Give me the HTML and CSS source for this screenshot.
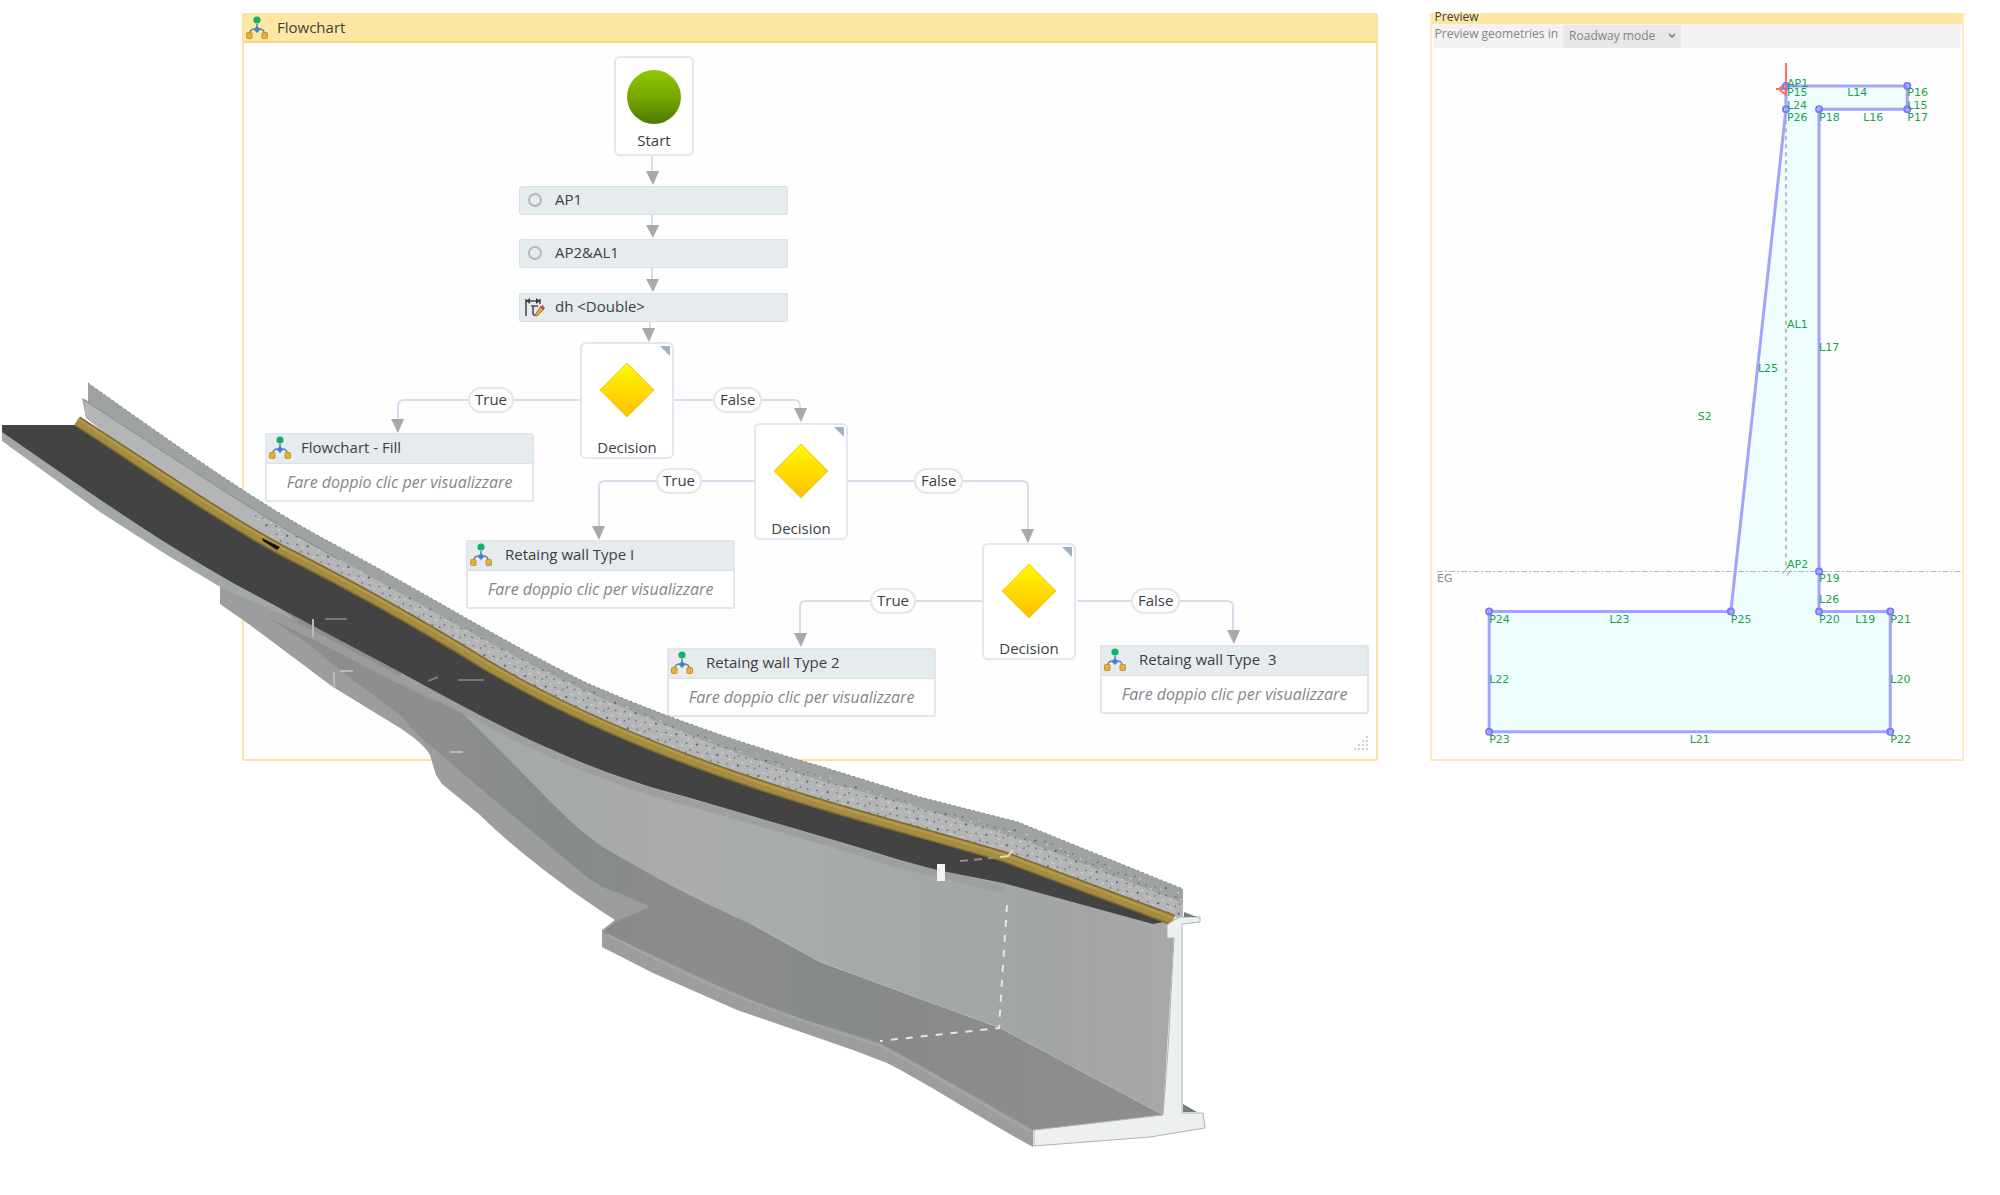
FILE: index.html
```html
<!DOCTYPE html>
<html lang="en">
<head>
<meta charset="utf-8">
<title>Retaining wall flowchart</title>
<link rel="stylesheet" href="styles.css">
</head>
<body>
<svg class="defs" width="0" height="0" aria-hidden="true">
  <defs>
    <linearGradient id="green" x1="0" y1="0" x2="0" y2="1"><stop offset="0" stop-color="#8fc800"/><stop offset=".5" stop-color="#76a800"/><stop offset="1" stop-color="#4f7a00"/></linearGradient>
    <linearGradient id="yellow" x1="0" y1="0" x2="0" y2="1"><stop offset="0" stop-color="#fffa00"/><stop offset="1" stop-color="#ffbf00"/></linearGradient>
    <symbol id="flow" viewBox="0 0 22 23">
      <path d="M11 8v6M4 17c0-3 2-4 5-4h4c3 0 5 1 5 4" fill="none" stroke="#6f7f96" stroke-width="1.5"/>
      <circle cx="11" cy="4" r="3.6" fill="#12b268"/>
      <path d="M11 10l3.500 3.500-3.500 3.500-3.500-3.500z" fill="#4a7fd6"/>
      <rect x=".5" y="16.500" width="5.500" height="6" rx="1" fill="#e5b040" stroke="#c8922a"/>
      <rect x="16" y="16.500" width="5.500" height="6" rx="1" fill="#e5b040" stroke="#c8922a"/>
    </symbol>
    <symbol id="diamond" viewBox="0 0 56 56"><path d="M28 1l27 27-27 27L1 28z" fill="url(#yellow)" stroke="#f3c52d"/></symbol>
    <symbol id="ring" viewBox="0 0 22 23"><circle cx="12" cy="12" r="6" fill="none" stroke="#b4b8ba" stroke-width="2"/></symbol>
    <symbol id="variable" viewBox="0 0 22 23">
      <path d="M3 4v17M3 6h14M17 4v5M8 11h7M10 11v7c0 2 2 3 3 2" fill="none" stroke="#4a4d52" stroke-width="1.600"/>
      <path d="M7 3L3 6l4 3zM13 3l4 3-4 3z" fill="#3a3d42"/>
      <path d="M12 20l6-9 3 3-7 7z" fill="#f0a52c" stroke="#a5702c"/><path d="M17.500 12l2-2 2.500 3-2 2z" fill="#d8413a"/>
    </symbol>
  </defs>
</svg>

<main class="board">
  <section class="panel flowchart">
    <h1 class="panel-head"><svg class="icon"><use href="#flow"/></svg>Flowchart</h1>
    <div class="canvas">
      <svg class="links" viewBox="244 43 1133 716" aria-hidden="true">
        <g class="wire">
          <path d="M652 156v18M652 215v14M652 268v14M650 322v10"/>
          <path d="M580 400H404q-6 0-6 6v16M674 400h120q6 0 6 6v6"/>
          <path d="M754 481H605q-6 0-6 6v42M848 481h174q6 0 6 6v46"/>
          <path d="M982 601H806q-6 0-6 6v30M1077 601h150q6 0 6 6v26"/>
        </g>
        <g class="tip">
          <path d="M646 171h13l-6 14zM646 225h13l-6 13zM646 279h13l-6 13zM642 328h13l-6 14z"/>
          <path d="M391 419h13l-6 14zM794 408h13l-6 14zM592 526h13l-6 14zM1021 529h13l-6 14zM794 633h13l-6 14zM1227 630h13l-6 14z"/>
        </g>
        <path class="grip" d="M1366 736h2v2h-2zM1366 740h2v2h-2zM1366 744h2v2h-2zM1366 748h2v2h-2zM1362 740h2v2h-2zM1362 744h2v2h-2zM1362 748h2v2h-2zM1358 744h2v2h-2zM1358 748h2v2h-2zM1354 748h2v2h-2z"/>
      </svg>

      <div class="node start"><svg class="shape" viewBox="0 0 56 56"><circle cx="28" cy="28" r="27" fill="url(#green)"/></svg>Start</div>

      <div class="node step step-ap1"><svg class="icon"><use href="#ring"/></svg>AP1</div>
      <div class="node step step-ap2"><svg class="icon"><use href="#ring"/></svg>AP2&amp;AL1</div>
      <div class="node step step-dh"><svg class="icon"><use href="#variable"/></svg>dh &lt;Double&gt;</div>

      <div class="node decision decision-1"><svg class="shape"><use href="#diamond"/></svg>Decision</div>
      <div class="node decision decision-2"><svg class="shape"><use href="#diamond"/></svg>Decision</div>
      <div class="node decision decision-3"><svg class="shape"><use href="#diamond"/></svg>Decision</div>

      <span class="node pill true-1">True</span>
      <span class="node pill false-1">False</span>
      <span class="node pill true-2">True</span>
      <span class="node pill false-2">False</span>
      <span class="node pill true-3">True</span>
      <span class="node pill false-3">False</span>

      <article class="node card card-fill"><h2><svg class="icon"><use href="#flow"/></svg>Flowchart - Fill</h2><p>Fare doppio clic per visualizzare</p></article>
      <article class="node card card-1"><h2><svg class="icon"><use href="#flow"/></svg>Retaing wall Type I</h2><p>Fare doppio clic per visualizzare</p></article>
      <article class="node card card-2"><h2><svg class="icon"><use href="#flow"/></svg>Retaing wall Type 2</h2><p>Fare doppio clic per visualizzare</p></article>
      <article class="node card card-3"><h2><svg class="icon"><use href="#flow"/></svg>Retaing wall Type&nbsp; 3</h2><p>Fare doppio clic per visualizzare</p></article>
    </div>
  </section>

  <section class="panel preview">
    <h2 class="preview-head">Preview</h2>
    <div class="toolbar">
      <label for="mode">Preview geometries in</label>
      <span class="select"><select id="mode"><option>Roadway mode</option></select><svg viewBox="0 0 8 6" aria-hidden="true"><path d="M1 1l3 3 3-3" fill="none" stroke="#777" stroke-width="1.500"/></svg></span>
    </div>
    <svg class="section" viewBox="1433 48 529 709">
      <path fill="#eefefe" d="M1786 86H1907V109H1819V610H1890V730H1490V610H1731L1786 109z"/>
      <path class="ground" d="M1438 570H1962"/>
      <path class="axis" d="M1786 112V566"/>
      <path class="mark" d="M1783 572l5-7M1787 574l4-5"/>
      <path class="edge" d="M1786 86H1907V109H1819V610H1890V730H1490V610H1731L1786 109z"/>
      <path d="M1786 63V96M1776 89h12M1786 83l-7 6 7 6" fill="none" stroke="#ff6b6b" stroke-width="2"/>
      <g class="points">
        <circle cx="1786" cy="86" r="3"/><circle cx="1907" cy="86" r="3"/><circle cx="1907" cy="109" r="3"/><circle cx="1819" cy="109" r="3"/><circle cx="1786" cy="109" r="3"/><circle cx="1819" cy="570" r="3"/><circle cx="1819" cy="610" r="3"/><circle cx="1890" cy="610" r="3"/><circle cx="1890" cy="730" r="3"/><circle cx="1490" cy="730" r="3"/><circle cx="1490" cy="610" r="3"/><circle cx="1731" cy="610" r="3"/>
      </g>
      <g class="labels">
        <text x="1787" y="87">AP1</text><text x="1787" y="96">P15</text><text x="1787" y="109">L24</text><text x="1787" y="121">P26</text>
        <text x="1847" y="96">L14</text><text x="1907" y="96">P16</text><text x="1907" y="109">L15</text><text x="1907" y="121">P17</text>
        <text x="1819" y="121">P18</text><text x="1863" y="121">L16</text>
        <text x="1787" y="327">AL1</text><text x="1819" y="350">L17</text><text x="1758" y="371">L25</text><text x="1698" y="419">S2</text>
        <text x="1787" y="567">AP2</text><text x="1819" y="581">P19</text><text x="1819" y="601">L26</text>
        <text x="1819" y="621">P20</text><text x="1855" y="621">L19</text><text x="1890" y="621">P21</text>
        <text x="1490" y="621">P24</text><text x="1610" y="621">L23</text><text x="1731" y="621">P25</text>
        <text x="1490" y="681">L22</text><text x="1890" y="681">L20</text>
        <text x="1490" y="741">P23</text><text x="1690" y="741">L21</text><text x="1890" y="741">P22</text>
        <text class="eg" x="1438" y="581">EG</text>
      </g>
    </svg>
  </section>
</main>

<svg class="road" viewBox="0 0 2000 1195" role="img" aria-label="Road model with retaining walls">
  <defs>
    <pattern id="grit" width="23" height="17" patternUnits="userSpaceOnUse" patternTransform="rotate(27)">
      <path d="M1 3h2v1H1zM9 1h1v2H9zM15 6h2v2h-2zM5 10h2v1H5zM19 13h2v1h-2zM12 14h1v2h-1z" fill="#62676b"/>
      <path d="M5 5h2v1H5zM18 2h2v1h-2zM11 10h2v1h-2zM2 14h2v1H2z" fill="#d9dcdd"/>
    </pattern>
    <linearGradient id="wall" gradientUnits="userSpaceOnUse" x1="480" y1="0" x2="1175" y2="0"><stop offset="0" stop-color="#a4a9a7"/><stop offset=".22" stop-color="#a7aaa8"/><stop offset=".29" stop-color="#ababab"/><stop offset=".4" stop-color="#a7ada9"/><stop offset=".78" stop-color="#a1a7a3"/><stop offset=".88" stop-color="#a5a5a5"/><stop offset="1" stop-color="#a8a8a8"/></linearGradient>
    <linearGradient id="floor" gradientUnits="userSpaceOnUse" x1="300" y1="0" x2="1165" y2="0"><stop offset="0" stop-color="#8e8e8e"/><stop offset=".17" stop-color="#8d8e8e"/><stop offset=".28" stop-color="#868c89"/><stop offset=".38" stop-color="#888b8a"/><stop offset=".42" stop-color="#8c8c8c"/><stop offset=".52" stop-color="#8b8c8c"/><stop offset=".6" stop-color="#858b88"/><stop offset=".7" stop-color="#888a89"/><stop offset=".8" stop-color="#8c8c8c"/><stop offset="1" stop-color="#8e8e8e"/></linearGradient>
  </defs>
  <!-- footing sides -->
  <path fill="#9b9e9d" d="M220 583V604L250 625 333 687 400 728C415 738 425 746 430 755L436 775 442 784 480 815C510 845 560 885 615 920L602 930V947L653 973 737 1010 853 1050 887 1063C930 1085 980 1118 1033 1147V1125L800 960 500 740 400 670z"/>
  <!-- footing top -->
  <path fill="url(#floor)" d="M235 596L307 643 350 678 400 715 420 737C470 780 530 830 570 863Q600 890 620 893L650 907 615 922 603 932 670 963Q737 996 800 1018L880 1043Q930 1070 1035 1131L1165 1116 1000 1028 937 1005 820 962 753 925 670 885 603 847 570 820 493 743 455 700 400 668 300 610z"/>
  <path fill="none" stroke="#a5a6a5" stroke-width="2" d="M608 935L670 966Q737 998 800 1020L880 1046Q930 1073 1031 1132"/>
  <!-- wall face -->
  <path fill="url(#wall)" d="M400 672C430 690 445 695 460 711L493 743C540 790 570 825 603 847 650 875 700 902 753 925L820 962 937 1005 1000 1028 1163 1115 1175 920 900 855 687 795 553 750z"/>
  <path fill="none" stroke="#9a9d9c" stroke-width="8" d="M225 592L317 637 400 680 440 699"/>
  <path fill="none" stroke="#9da09e" stroke-width="7" d="M400 676C490 726 580 774 687 802 757 822 830 842 900 865L1003 889"/>
  <!-- deck edge -->
  <path fill="#a3a7a8" d="M2 430V441L100 512 167 555 222 588 300 623 233 575 83 480z"/>
  <!-- asphalt -->
  <path fill="#434343" d="M2 425H77C150 468 215 514 283 551 350 585 417 622 483 663 590 727 710 771 820 804 880 822 940 838 1005 857L1173 920 1153 924 1003 883 937 870 900 860C830 838 757 818 687 797 580 770 490 722 400 672L317 628 233 583C180 553 130 520 83 488L2 432z"/>
  <!-- barrier -->
  <path fill="#9fa2a3" d="M88 383C180 448 260 505 330 542 420 590 500 640 587 683 660 715 740 743 820 766L920 797 1018 822 1183 889V918L1173 917 1005 857C940 838 880 822 820 804 710 771 590 727 483 663 417 622 350 585 283 551 215 514 150 468 86 418L82 398 88 401z"/>
  <path fill="#b3b5b6" d="M84 400C180 462 260 517 340 560 420 603 500 652 590 693 660 724 740 757 820 780L920 808 1018 838 1183 903V918L1173 917 1005 857C940 838 880 822 820 804 710 771 590 727 483 663 417 622 350 585 283 551 215 514 150 468 86 418z"/>
  <path fill="url(#grit)" d="M250 510L340 560C420 603 500 647 590 690 660 720 740 752 820 775L920 805 1018 830 1183 893V918L1173 917 1005 857C940 838 880 822 820 804 710 771 590 727 483 663 417 622 350 585 283 551z"/>
  <path fill="none" stroke="#7d8183" stroke-width="1" stroke-dasharray="2 3" d="M88 383C180 448 260 505 330 542 420 590 500 640 587 683 660 715 740 743 820 766L920 797 1018 822 1183 889"/>
  <path fill="none" stroke="#8b8f91" stroke-width="1" d="M84 400C180 462 260 517 340 560"/>
  <!-- kerb line -->
  <path fill="none" stroke="#7d6a33" stroke-width="11" d="M77 421C150 468 215 514 283 551 350 585 417 622 483 663 590 727 710 771 820 804 880 822 940 838 1005 857L1173 920"/>
  <path fill="none" stroke="#a68c41" stroke-width="8" d="M77 421C150 468 215 514 283 551 350 585 417 622 483 663 590 727 710 771 820 804 880 822 940 838 1005 857L1173 920"/>
  <path fill="none" stroke="#b59a4a" stroke-width="2" d="M78 419C151 466 216 512 284 549 351 583 418 620 484 661 591 725 711 769 820 802 880 820 940 836 1005 855L1173 918"/>
  <path fill="#111" d="M262 538l18 9-3 3-14-9z"/>
  <!-- cut section -->
  <path fill="#eef0ed" stroke="#a9b4bc" d="M1167 925L1174 920 1180 917H1200V922L1182 924V1113H1203L1205 1128 1150 1137 1034 1146V1130L1163 1115 1168 1050 1174 938H1167z"/>
  <path fill="#777c7e" d="M1184 912l13 5h-13zM1183 1104l14 8h-14z"/>
  <!-- break marks -->
  <g fill="none" stroke="#e4e8e5" stroke-width="2">
    <path stroke-dasharray="7 8" d="M1007 905L1003 965 999 1028 880 1041"/>
    <path stroke="#8f918f" stroke-dasharray="8 6" d="M960 861L1002 857"/>
    <path stroke="#777" d="M325 619h22M458 680h26M428 681l10-4"/>
    <path stroke="#b8bab9" d="M313 619v18M340 671h13M450 752h13M334 672v16"/>
    <path stroke="#e6dcae" d="M1000 857l8-1 5-6"/>
  </g>
  <path fill="#f4f5f3" d="M937 864h8v17h-8z"/>
</svg>
</body>
</html>
```
FILE: styles.css
```css
* { box-sizing: border-box; }

body {
  margin: 0;
  position: relative;
  background: #fff;
  color: #3b3f45;
  font: 15px/20px "Open Sans", "Noto Sans", sans-serif;
}

h1, h2, p { margin: 0; font: inherit; }

.defs { position: absolute; }

.board {
  display: flex;
  align-items: flex-start;
  gap: 52px;
  padding: 13px 36px 434px 242px;
}

.panel { border: 2px solid #fce3a5; background: #fefefe; }

.icon { width: 22px; height: 23px; flex: none; }

/* Flowchart panel */
.flowchart { flex: 1137 1 0; border-radius: 2px; }

.panel-head {
  display: flex;
  align-items: center;
  gap: 9px;
  height: 28px;
  padding: 0 2px 2px;
  background: #fee7a2;
  border-bottom: 2px solid #fbd57d;
  font-weight: 500;
}

.canvas { position: relative; height: 716px; }

.links { position: absolute; left: 0; top: 0; width: 1133px; height: 716px; }
.wire { fill: none; stroke: #d5deea; stroke-width: 2; }
.tip { fill: #a9a9a9; }
.grip { fill: #d0d0dc; }

.node { position: absolute; border: 2px solid #e2e6f0; background: #fff; }

.start,
.decision {
  display: flex;
  flex-direction: column;
  align-items: center;
  justify-content: space-between;
  border-radius: 6px;
}

.shape { width: 56px; height: 56px; }

.start { left: 370px; top: 13px; width: 80px; height: 100px; padding: 11px 0 4px; }

.decision { width: 94px; height: 117px; padding-top: 18px; }
.decision::after {
  content: "";
  position: absolute;
  right: 2px;
  top: 2px;
  border-top: 10px solid #9fb2c0;
  border-left: 10px solid transparent;
}
.decision-1 { left: 336px; top: 299px; }
.decision-2 { left: 510px; top: 380px; }
.decision-3 { left: 738px; top: 500px; }

.step {
  left: 275px;
  width: 269px;
  height: 29px;
  display: flex;
  align-items: center;
  gap: 10px;
  padding-left: 3px;
  padding-bottom: 3px;
  background: #e6ebee;
  border: 1px solid #dae1e9;
  border-radius: 2px;
  font-weight: 500;
}
.step-ap1 { top: 143px; }
.step-ap2 { top: 196px; }
.step-dh { top: 250px; }

.pill {
  height: 26px;
  padding: 0 5px;
  line-height: 21px;
  border-color: #e6e6e6;
  border-radius: 13px;
}
.true-1 { left: 224px; top: 344px; }
.false-1 { left: 469px; top: 344px; }
.true-2 { left: 412px; top: 425px; }
.false-2 { left: 670px; top: 425px; }
.true-3 { left: 626px; top: 545px; }
.false-3 { left: 887px; top: 545px; }

.card { width: 269px; height: 69px; border-color: #e0e5ee; border-radius: 2px; }
.card h2 {
  display: flex;
  align-items: center;
  gap: 10px;
  height: 29px;
  padding: 0 2px 4px;
  background: #e6ebee;
  border-bottom: 1px solid #d8e0e9;
  font-weight: 500;
}
.card p { padding-top: 8px; text-align: center; font-style: italic; font-size: 16px; color: #83868a; }
.card-fill { left: 21px; top: 390px; }
.card-1 { left: 222px; top: 497px; }
.card-2 { left: 423px; top: 605px; }
.card-3 { left: 856px; top: 602px; }
.card-1 h2, .card-2 h2, .card-3 h2 { gap: 13px; }

/* Preview panel */
.preview { flex: 533 1 0; border-color: #fdeac3; border-top: 0; }

.preview-head {
  height: 11px;
  padding-left: 3px;
  font-size: 12px;
  font-weight: 500;
  line-height: 7px;
  background: #fee7a2;
}

.toolbar {
  display: flex;
  align-items: center;
  gap: 5px;
  height: 24px;
  margin: 0 1px 0 2px;
  background: #f3f3f3;
  color: #858585;
  font-size: 12px;
}

.toolbar label { padding: 0 0 5px 1px; }

.select { position: relative; display: flex; height: 23px; }
.select select {
  width: 118px;
  padding: 0 24px 0 6px;
  border: 0;
  appearance: none;
  background: #e8e8e8;
  color: inherit;
  font: inherit;
}
.select svg { position: absolute; right: 5px; top: 8px; width: 8px; height: 6px; pointer-events: none; }

.section { display: block; width: 100%; }
.ground { fill: none; stroke: #b5b5b5; stroke-width: 1; stroke-dasharray: 6 2 2 2; }
.axis { fill: none; stroke: #b6bcbc; stroke-width: 2; stroke-dasharray: 4 4; }
.mark { fill: none; stroke: #a5a5a5; stroke-width: 1; }
.edge { fill: none; stroke: #a3a3ff; stroke-width: 3; }
.points { fill: none; stroke: #7a7aff; stroke-width: 2; }
.labels { fill: #1ba24b; font: 11px "DejaVu Sans", sans-serif; }
.labels .eg { fill: #8c8c8c; }

/* Road model laid over the panels */
.road { position: absolute; left: 0; top: 0; width: 100%; pointer-events: none; }
```
